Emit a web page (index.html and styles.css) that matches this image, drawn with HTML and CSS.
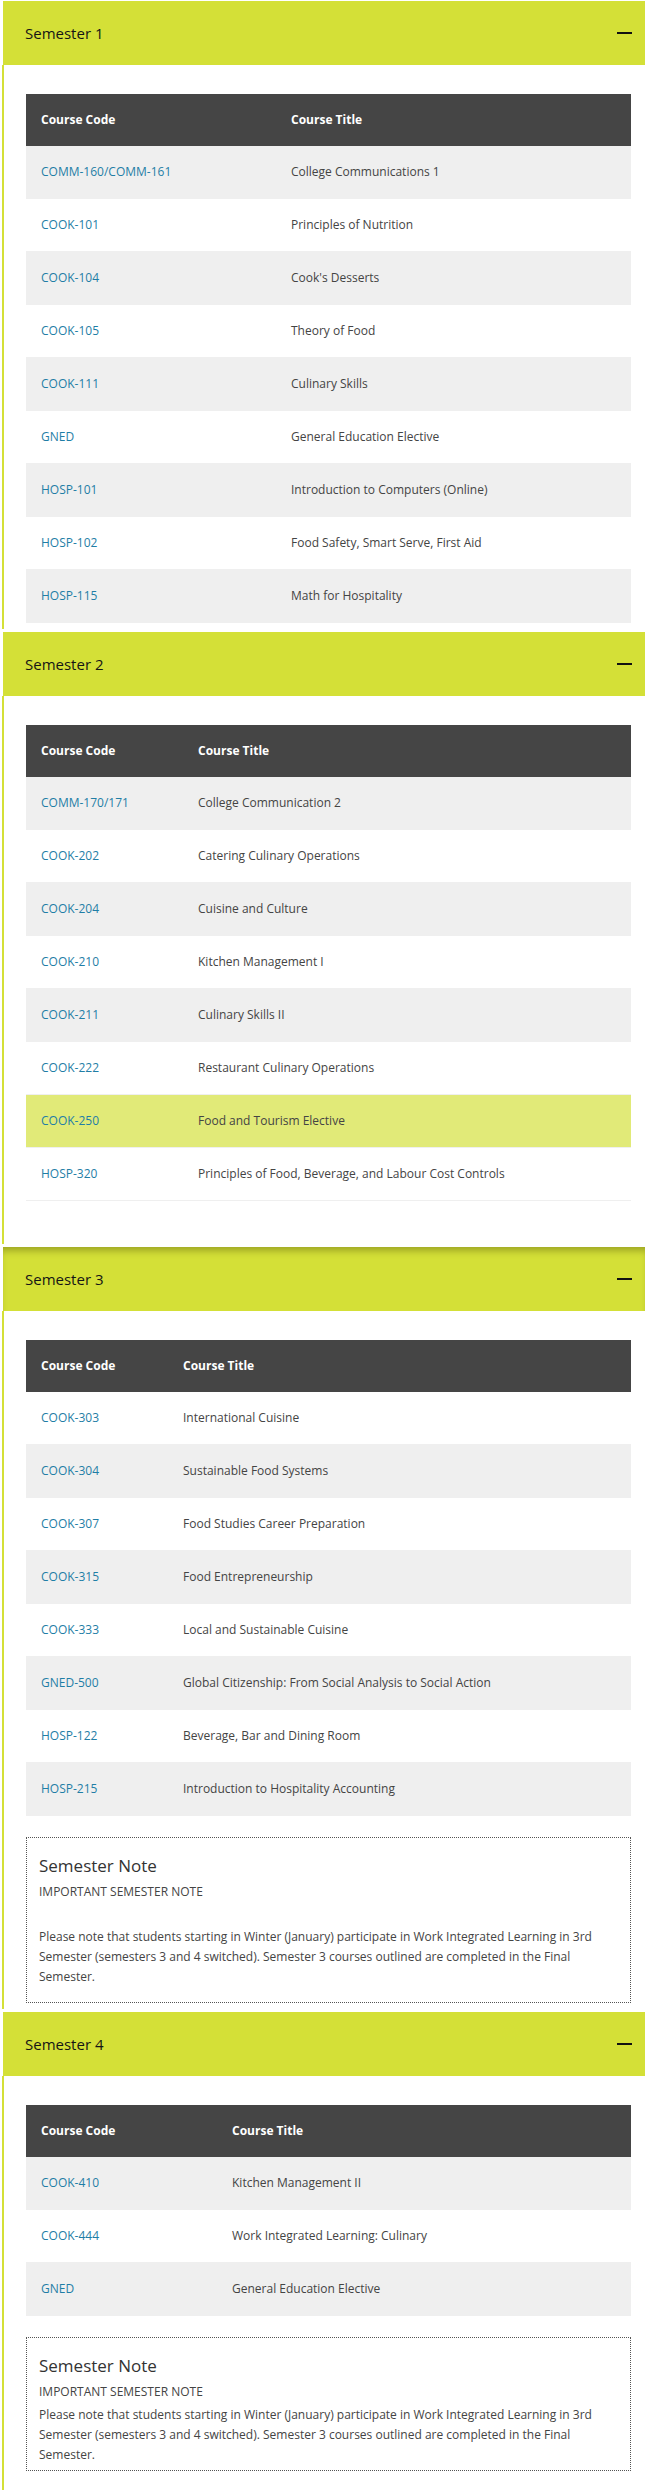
FILE: index.html
```html
<!DOCTYPE html>
<html lang="en">
<head>
  <meta charset="UTF-8" />
  <meta name="viewport" content="width=device-width, initial-scale=1.0"/>
  <title>Program Courses</title>
  <link rel="stylesheet" href="styles.css">
</head>
<body>

  <div class="accordion">

    <!-- Semester 1 -->
    <section class="acc-item">
      <h3 class="acc-head"><span>Semester 1</span><span class="acc-icon"></span></h3>
      <div class="acc-body">
        <table class="course-table sem-1">
          <colgroup><col class="col-code"><col></colgroup>
          <thead>
            <tr><th>Course Code</th><th>Course Title</th></tr>
          </thead>
          <tbody>
            <tr><td><a href="#">COMM-160/COMM-161</a></td><td>College Communications 1</td></tr>
            <tr><td><a href="#">COOK-101</a></td><td>Principles of Nutrition</td></tr>
            <tr><td><a href="#">COOK-104</a></td><td>Cook's Desserts</td></tr>
            <tr><td><a href="#">COOK-105</a></td><td>Theory of Food</td></tr>
            <tr><td><a href="#">COOK-111</a></td><td>Culinary Skills</td></tr>
            <tr><td><a href="#">GNED</a></td><td>General Education Elective</td></tr>
            <tr><td><a href="#">HOSP-101</a></td><td>Introduction to Computers (Online)</td></tr>
            <tr><td><a href="#">HOSP-102</a></td><td>Food Safety, Smart Serve, First Aid</td></tr>
            <tr><td><a href="#">HOSP-115</a></td><td>Math for Hospitality</td></tr>
          </tbody>
        </table>
      </div>
    </section>

    <!-- Semester 2 -->
    <section class="acc-item">
      <h3 class="acc-head"><span>Semester 2</span><span class="acc-icon"></span></h3>
      <div class="acc-body acc-body-tall">
        <table class="course-table sem-2">
          <colgroup><col class="col-code"><col></colgroup>
          <thead>
            <tr><th>Course Code</th><th>Course Title</th></tr>
          </thead>
          <tbody>
            <tr><td><a href="#">COMM-170/171</a></td><td>College Communication 2</td></tr>
            <tr><td><a href="#">COOK-202</a></td><td>Catering Culinary Operations</td></tr>
            <tr><td><a href="#">COOK-204</a></td><td>Cuisine and Culture</td></tr>
            <tr><td><a href="#">COOK-210</a></td><td>Kitchen Management I</td></tr>
            <tr><td><a href="#">COOK-211</a></td><td>Culinary Skills II</td></tr>
            <tr><td><a href="#">COOK-222</a></td><td>Restaurant Culinary Operations</td></tr>
            <tr class="is-hover"><td><a href="#">COOK-250</a></td><td>Food and Tourism Elective</td></tr>
            <tr><td><a href="#">HOSP-320</a></td><td>Principles of Food, Beverage, and Labour Cost Controls</td></tr>
          </tbody>
        </table>
      </div>
    </section>

    <!-- Semester 3 -->
    <section class="acc-item">
      <h3 class="acc-head is-focus"><span>Semester 3</span><span class="acc-icon"></span></h3>
      <div class="acc-body">
        <table class="course-table sem-3 stripe-even">
          <colgroup><col class="col-code"><col></colgroup>
          <thead>
            <tr><th>Course Code</th><th>Course Title</th></tr>
          </thead>
          <tbody>
            <tr><td><a href="#">COOK-303</a></td><td>International Cuisine</td></tr>
            <tr><td><a href="#">COOK-304</a></td><td>Sustainable Food Systems</td></tr>
            <tr><td><a href="#">COOK-307</a></td><td>Food Studies Career Preparation</td></tr>
            <tr><td><a href="#">COOK-315</a></td><td>Food Entrepreneurship</td></tr>
            <tr><td><a href="#">COOK-333</a></td><td>Local and Sustainable Cuisine</td></tr>
            <tr><td><a href="#">GNED-500</a></td><td>Global Citizenship: From Social Analysis to Social Action</td></tr>
            <tr><td><a href="#">HOSP-122</a></td><td>Beverage, Bar and Dining Room</td></tr>
            <tr><td><a href="#">HOSP-215</a></td><td>Introduction to Hospitality Accounting</td></tr>
          </tbody>
        </table>

        <div class="note note-spaced">
          <h4 class="note-title">Semester Note</h4>
          <p class="note-label">IMPORTANT SEMESTER NOTE</p>
          <p class="note-text">Please note that students starting in Winter (January) participate in Work Integrated Learning in 3rd Semester (semesters 3 and 4 switched). Semester 3 courses outlined are completed in the Final Semester.</p>
        </div>
      </div>
    </section>

    <!-- Semester 4 -->
    <section class="acc-item acc-item-last">
      <h3 class="acc-head"><span>Semester 4</span><span class="acc-icon"></span></h3>
      <div class="acc-body">
        <table class="course-table sem-4">
          <colgroup><col class="col-code"><col></colgroup>
          <thead>
            <tr><th>Course Code</th><th>Course Title</th></tr>
          </thead>
          <tbody>
            <tr><td><a href="#">COOK-410</a></td><td>Kitchen Management II</td></tr>
            <tr><td><a href="#">COOK-444</a></td><td>Work Integrated Learning: Culinary</td></tr>
            <tr><td><a href="#">GNED</a></td><td>General Education Elective</td></tr>
          </tbody>
        </table>

        <div class="note">
          <h4 class="note-title">Semester Note</h4>
          <p class="note-label">IMPORTANT SEMESTER NOTE</p>
          <p class="note-text">Please note that students starting in Winter (January) participate in Work Integrated Learning in 3rd Semester (semesters 3 and 4 switched). Semester 3 courses outlined are completed in the Final Semester.</p>
        </div>
      </div>
    </section>

  </div>

</body>
</html>
```

FILE: styles.css
```css
body {
  margin: 0;
  font-family: 'Open Sans', sans-serif;
  color: #444;
  background: #fff;
}

/* the last item runs down to the bottom of the window */
.accordion {
  padding-top: 1px;
  min-height: 100vh;
  box-sizing: border-box;
  display: flex;
  flex-direction: column;
}

.acc-item {
  margin: 0 0 3px 2px;
}

.acc-item-last {
  margin-bottom: 0;
  flex: 1;
  display: flex;
  flex-direction: column;
}

.acc-item-last .acc-body {
  flex: 1;
}

/* yellow header bar */
.acc-head {
  margin: 0 0 0 1px;
  height: 64px;
  padding: 0 13px 0 22px;
  box-sizing: border-box;
  background-color: #d4e037;
  display: flex;
  align-items: center;
  justify-content: space-between;
  font-size: 15px;
  font-weight: normal;
  color: #151515;
}

.acc-head.is-focus {
  box-shadow: inset 0 7px 7px -3px rgba(60, 60, 0, 0.35);
}

.acc-icon {
  width: 15px;
  height: 2px;
  background: #111;
}

.acc-body {
  border-left: 2px solid #d4e037;
  padding: 29px 14px 6px 22px;
}

.acc-body-tall {
  padding-bottom: 43px;
}

/* course tables */
.course-table {
  width: 100%;
  border-collapse: separate;
  border-spacing: 0;
  table-layout: fixed;
  font-size: 12px;
}

.sem-1 .col-code { width: 250px; }
.sem-2 .col-code { width: 157px; }
.sem-3 .col-code { width: 142px; }
.sem-4 .col-code { width: 191px; }

.course-table th {
  background: #454545;
  color: #fff;
  font-weight: bold;
  text-align: left;
  padding: 17px 15px;
  line-height: 18px;
}

.course-table td {
  padding: 17px 15px 17px;
  line-height: 18px;
  border-bottom: 1px solid #efefef;
  color: #444;
}

.course-table tbody tr:nth-child(odd) td {
  background: #efefef;
}

.course-table.stripe-even tbody tr:nth-child(odd) td {
  background: #fff;
}

.course-table.stripe-even tbody tr:nth-child(even) td {
  background: #efefef;
}

.course-table tbody tr.is-hover td {
  background: #e1ea78;
}

.course-table a {
  color: #1f7ea6;
  text-decoration: none;
}

/* semester note box */
.note {
  margin-top: 21px;
  border: 1px dotted #555;
  padding: 16px 12px 5px;
}

.note-title {
  margin: 0 0 4px;
  font-size: 17px;
  line-height: 24px;
  font-weight: normal;
  color: #333;
}

.note p {
  margin: 0;
  font-size: 12px;
  line-height: 20px;
  color: #444;
}

.note .note-label {
  margin-bottom: 3px;
}

.note-spaced .note-label {
  margin-bottom: 25px;
}

.note-spaced .note-text {
  margin-bottom: 10px;
}
```
